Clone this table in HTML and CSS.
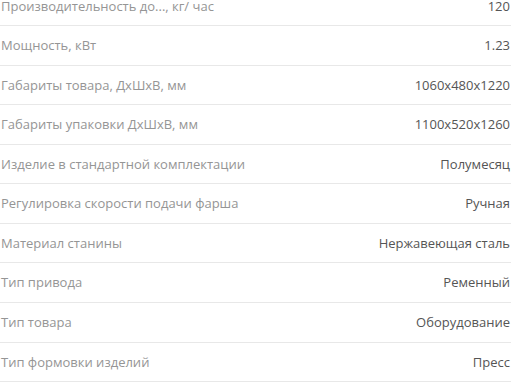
FILE: index.html
```html
<!DOCTYPE html>
<html lang="ru">
<head>
<meta charset="utf-8">
<link rel="stylesheet" href="styles.css">
</head>
<body>
<div class="specs">
  <div class="row"><span class="label">Производительность до..., кг/ час</span><span class="value">120</span></div>
  <div class="row"><span class="label">Мощность, кВт</span><span class="value">1.23</span></div>
  <div class="row"><span class="label">Габариты товара, ДхШхВ, мм</span><span class="value">1060x480x1220</span></div>
  <div class="row"><span class="label">Габариты упаковки ДхШхВ, мм</span><span class="value">1100x520x1260</span></div>
  <div class="row"><span class="label">Изделие в стандартной комплектации</span><span class="value">Полумесяц</span></div>
  <div class="row"><span class="label">Регулировка скорости подачи фарша</span><span class="value">Ручная</span></div>
  <div class="row"><span class="label">Материал станины</span><span class="value">Нержавеющая сталь</span></div>
  <div class="row"><span class="label">Тип привода</span><span class="value">Ременный</span></div>
  <div class="row"><span class="label">Тип товара</span><span class="value">Оборудование</span></div>
  <div class="row"><span class="label">Тип формовки изделий</span><span class="value">Пресс</span></div>
</div>
</body>
</html>
```

FILE: styles.css
```css
html, body {
  margin: 0;
  padding: 0;
  background: #fff;
  overflow: hidden;
}
.specs {
  width: 511px;
  margin-top: -13.5px;
  font-family: "Open Sans", sans-serif;
  font-size: 13px;
}
.row {
  display: flex;
  justify-content: space-between;
  align-items: center;
  padding: 10px 0;
  line-height: 18.56px;
  border-bottom: 1px solid #e8e8e8;
}
.label {
  color: #959595;
  padding-left: 1px;
}
.value {
  color: #555;
  padding-right: 1px;
}
```
